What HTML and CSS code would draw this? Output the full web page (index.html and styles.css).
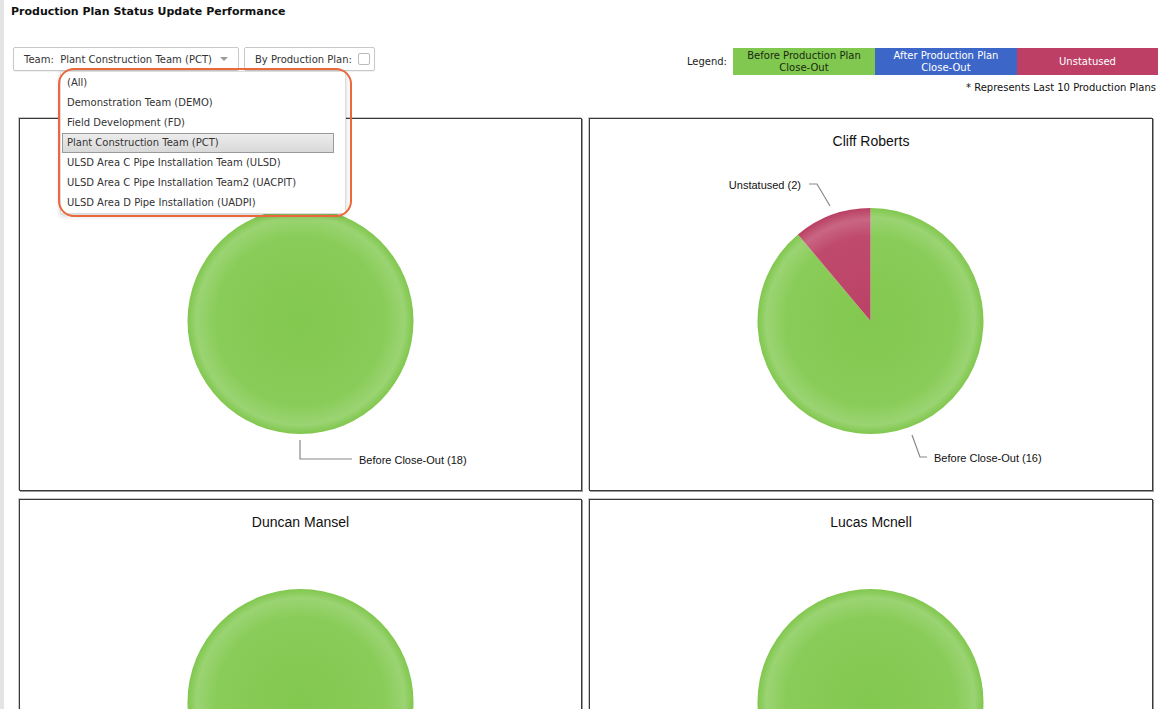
FILE: index.html
```html
<!DOCTYPE html>
<html lang="en">

<head>
    <meta charset="UTF-8" />
    <meta name="viewport" content="width=device-width, initial-scale=1.0" />
    <title>Production Plan Status Update Performance</title>
    <link rel="stylesheet" href="styles.css">
</head>

<body>
    <div class="page">
        <h1 class="page-title">Production Plan Status Update Performance</h1>

        <div class="toolbar">
            <div class="filters">
                <div class="team-filter">
                    <button type="button" class="filter-btn">
                        Team:&nbsp; Plant Construction Team (PCT)
                        <span class="caret"></span>
                    </button>

                    <!-- open team list -->
                    <ul class="team-list">
                        <li>(All)</li>
                        <li>Demonstration Team (DEMO)</li>
                        <li>Field Development (FD)</li>
                        <li class="selected">Plant Construction Team (PCT)</li>
                        <li>ULSD Area C Pipe Installation Team (ULSD)</li>
                        <li>ULSD Area C Pipe Installation Team2 (UACPIT)</li>
                        <li>ULSD Area D Pipe Installation (UADPI)</li>
                    </ul>
                    <div class="team-ring"></div>
                </div>
                <label class="filter-btn plan-filter">
                    By Production Plan:
                    <span class="check"></span>
                </label>
            </div>

            <div class="legend-wrap">
                <div class="legend">
                    <span class="legend-label">Legend:</span>
                    <span class="legend-item before">Before Production Plan<br>Close-Out</span>
                    <span class="legend-item after">After Production Plan<br>Close-Out</span>
                    <span class="legend-item unstatused">Unstatused</span>
                </div>
                <div class="legend-note">* Represents Last 10 Production Plans</div>
            </div>
        </div>

        <div class="charts">
            <div class="chart">
                <h3 class="chart-title">Adam Fisk</h3>
                <svg class="pie" viewBox="0 0 561 341">
                    <defs>
                        <radialGradient id="g1" cx="280.5" cy="172" r="113" gradientUnits="userSpaceOnUse">
                            <stop offset="0" stop-color="#82c84f" />
                            <stop offset="0.75" stop-color="#8acc59" />
                            <stop offset="0.92" stop-color="#9bd473" />
                            <stop offset="1" stop-color="#80c74d" />
                        </radialGradient>
                    </defs>
                    <circle cx="280.5" cy="172" r="113" fill="url(#g1)" />
                    <polyline class="leader" points="280,291 280,310 332,310" />
                    <text class="pie-label" x="339" y="315">Before Close-Out (18)</text>
                </svg>
            </div>

            <div class="chart">
                <h3 class="chart-title">Cliff Roberts</h3>
                <svg class="pie" viewBox="0 0 561 341">
                    <defs>
                        <radialGradient id="g2" cx="280.5" cy="172" r="113" gradientUnits="userSpaceOnUse">
                            <stop offset="0" stop-color="#82c84f" />
                            <stop offset="0.75" stop-color="#8acc59" />
                            <stop offset="0.92" stop-color="#9bd473" />
                            <stop offset="1" stop-color="#80c74d" />
                        </radialGradient>
                        <radialGradient id="r2" cx="280.5" cy="172" r="113" gradientUnits="userSpaceOnUse">
                            <stop offset="0" stop-color="#bb4166" />
                            <stop offset="0.75" stop-color="#bf4a6d" />
                            <stop offset="0.9" stop-color="#c96683" />
                            <stop offset="1" stop-color="#b93f63" />
                        </radialGradient>
                    </defs>
                    <!-- 16 before close-out, 2 unstatused -->
                    <path d="M280.5,172 L280.5,59 A113,113 0 1 1 207.9,85.4 Z" fill="url(#g2)" />
                    <path d="M280.5,172 L207.9,85.4 A113,113 0 0 1 280.5,59 Z" fill="url(#r2)" />
                    <polyline class="leader" points="219,35 227,35 240,57" />
                    <text class="pie-label" x="211" y="40" text-anchor="end">Unstatused (2)</text>
                    <polyline class="leader" points="322,286 330,308 337,308" />
                    <text class="pie-label" x="344" y="313">Before Close-Out (16)</text>
                </svg>
            </div>

            <div class="chart">
                <h3 class="chart-title">Duncan Mansel</h3>
                <svg class="pie" viewBox="0 0 561 341">
                    <defs>
                        <radialGradient id="g3" cx="280.5" cy="172" r="113" gradientUnits="userSpaceOnUse">
                            <stop offset="0" stop-color="#82c84f" />
                            <stop offset="0.75" stop-color="#8acc59" />
                            <stop offset="0.92" stop-color="#9bd473" />
                            <stop offset="1" stop-color="#80c74d" />
                        </radialGradient>
                    </defs>
                    <circle cx="280.5" cy="172" r="113" fill="url(#g3)" />
                </svg>
            </div>

            <div class="chart">
                <h3 class="chart-title">Lucas Mcnell</h3>
                <svg class="pie" viewBox="0 0 561 341">
                    <defs>
                        <radialGradient id="g4" cx="280.5" cy="172" r="113" gradientUnits="userSpaceOnUse">
                            <stop offset="0" stop-color="#82c84f" />
                            <stop offset="0.75" stop-color="#8acc59" />
                            <stop offset="0.92" stop-color="#9bd473" />
                            <stop offset="1" stop-color="#80c74d" />
                        </radialGradient>
                    </defs>
                    <circle cx="280.5" cy="172" r="113" fill="url(#g4)" />
                </svg>
            </div>
        </div>
    </div>
</body>

</html>
```

FILE: styles.css
```css
body {
    margin: 0;
    background-color: white;
    color: #222;
    font-family: "DejaVu Sans", Verdana, sans-serif;
    font-size: 10px;
    overflow: hidden;
}

.page {
    border-left: 4px solid #e4e4e4;
    height: 709px;
    box-sizing: border-box;
    overflow: hidden;
}

.page-title {
    margin: 0;
    padding: 5px 0 0 7px;
    font-size: 11px;
    font-weight: bold;
    color: #111;
}

.toolbar {
    display: flex;
    justify-content: space-between;
    align-items: flex-start;
    margin-top: 29px;
    padding: 0 12px 0 9px;
}

.filters {
    display: flex;
    gap: 5px;
}

.team-filter {
    position: relative;
}

.filter-btn {
    display: flex;
    align-items: center;
    height: 24px;
    box-sizing: border-box;
    padding: 0 10px;
    border: 1px solid #c8c8c8;
    border-radius: 2px;
    background-color: white;
    font-family: inherit;
    font-size: 10px;
    color: #333;
    box-shadow: 0 1px 1px rgba(0, 0, 0, 0.06);
}

.caret {
    width: 0;
    height: 0;
    margin-left: 8px;
    border-left: 4px solid transparent;
    border-right: 4px solid transparent;
    border-top: 4px solid #999;
}

.plan-filter {
    padding-right: 4px;
}

.check {
    width: 10px;
    height: 10px;
    margin-left: 6px;
    border: 1px solid #bbb;
    border-radius: 2px;
}

.team-list {
    position: absolute;
    top: 24px;
    left: 47px;
    z-index: 5;
    width: 284px;
    margin: 0;
    padding: 1px 0 0;
    list-style: none;
    background-color: white;
    border: 1px solid #ddd;
    box-shadow: 0 2px 5px rgba(0, 0, 0, 0.18);
}

.team-list li {
    height: 20px;
    line-height: 20px;
    padding: 0 6px;
    color: #333;
    white-space: nowrap;
}

.team-list li.selected {
    margin: 0 11px 0 1px;
    padding: 0 4px;
    background: linear-gradient(#ececec, #d9d9d9);
    border: 1px solid #9a9a9a;
    height: 18px;
    line-height: 18px;
}

.team-ring {
    position: absolute;
    top: 21px;
    left: 45px;
    z-index: 6;
    width: 294px;
    height: 149px;
    box-sizing: border-box;
    border: 2px solid #e9683c;
    border-radius: 16px;
    pointer-events: none;
}

.legend-wrap {
    display: flex;
    flex-direction: column;
    align-items: flex-end;
    margin-top: 1px;
}

.legend {
    display: flex;
    align-items: center;
}

.legend-label {
    margin-right: 6px;
    color: #222;
}

.legend-item {
    display: flex;
    align-items: center;
    justify-content: center;
    width: 142px;
    height: 27px;
    text-align: center;
    line-height: 12px;
}

.legend-item.before {
    background-color: #80c84f;
    color: #1a2a10;
}

.legend-item.after {
    background-color: #3c67c8;
    color: white;
}

.legend-item.unstatused {
    background-color: #bd3f66;
    color: white;
    width: 141px;
}

.legend-note {
    margin-top: 7px;
    margin-right: 2px;
    color: #111;
}

.charts {
    display: grid;
    grid-template-columns: 563px 564px;
    grid-auto-rows: 373px;
    gap: 8px 7px;
    margin: 25px 0 0 15px;
}

.chart {
    border: 1px solid #3a3a3a;
    box-shadow: 1px 1px 0 #9a9a9a, -1px -1px 0 #c8c8c8;
    background-color: white;
}

.chart-title {
    margin: 14px 0 0;
    height: 16px;
    line-height: 16px;
    text-align: center;
    font-family: "Liberation Sans", Arial, sans-serif;
    font-size: 14px;
    font-weight: normal;
    color: #111;
}

.pie {
    display: block;
    width: 561px;
    height: 341px;
}

.leader {
    fill: none;
    stroke: #888;
    stroke-width: 1.2;
}

.pie-label {
    font-family: "Liberation Sans", Arial, sans-serif;
    font-size: 11px;
    fill: #111;
}
```
